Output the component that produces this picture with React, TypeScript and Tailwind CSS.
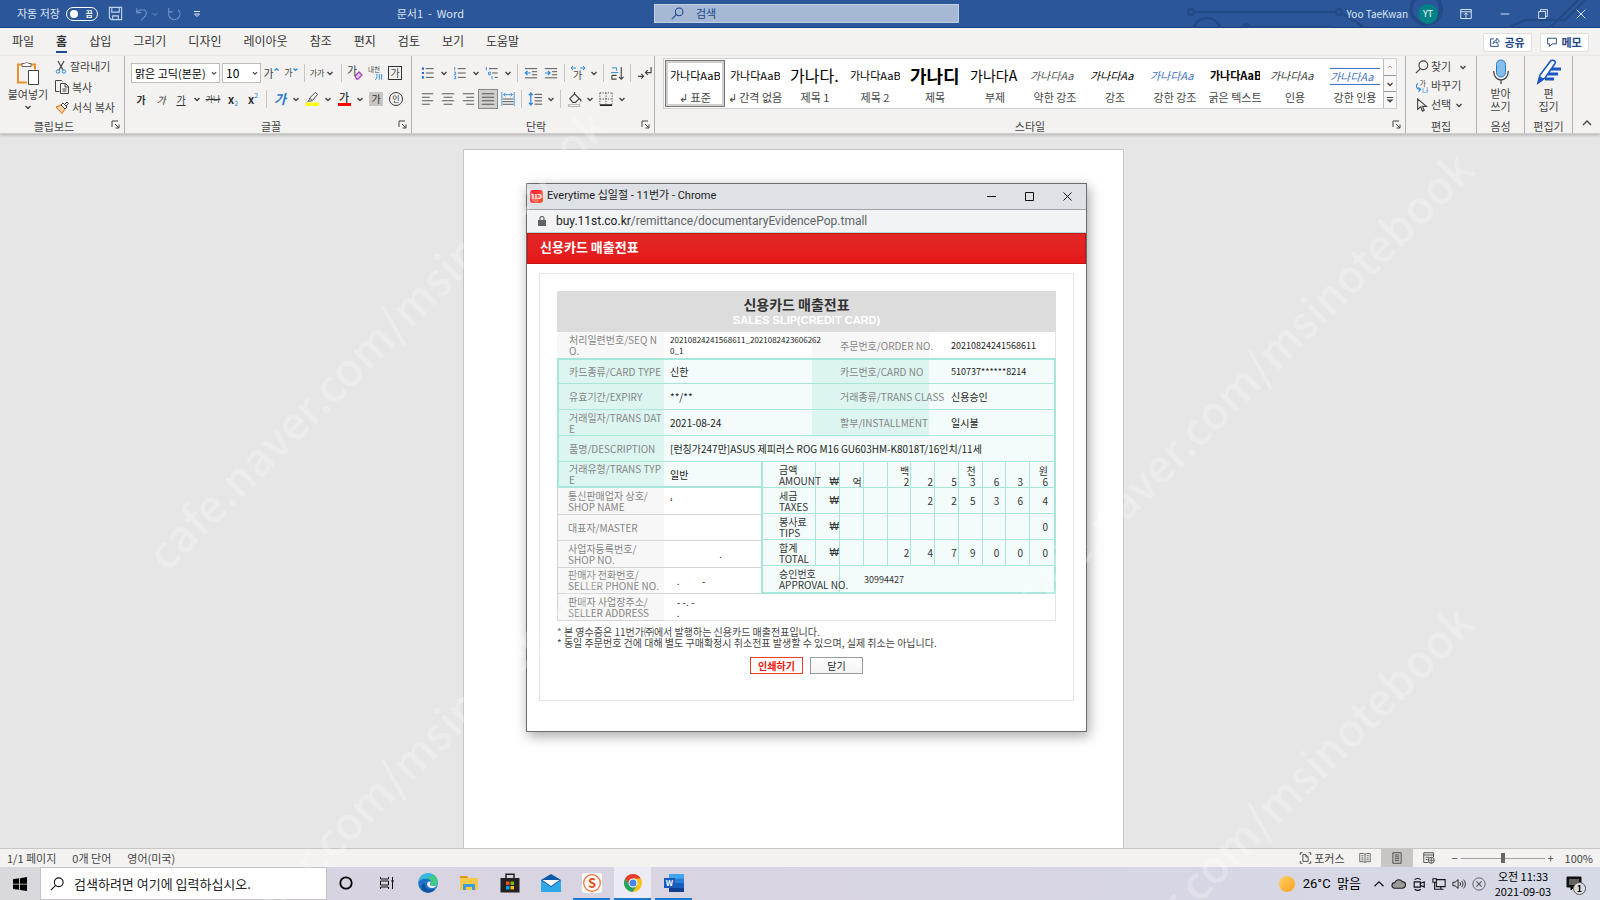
import React from 'react';

interface ChildrenProps {
  children?: React.ReactNode;
  className?: string;
}

const Svg: React.FC<ChildrenProps & { box?: string }> = ({ children, className = 'w-4 h-4', box = '0 0 16 16' }) => (
  <svg viewBox={box} className={`shrink-0 ${className}`} fill="none" stroke="#444" aria-hidden="true">
    {children}
  </svg>
);

const Chevron: React.FC<{ className?: string }> = ({ className = 'w-3 h-3' }) => (
  <Svg className={className} box="0 0 12 12">
    <path d="M3.5 5l2.5 2.5L8.5 5" strokeWidth="1.4" />
  </Svg>
);

const Tool: React.FC<ChildrenProps & { label: string }> = ({ children, className = 'w-5', label }) => (
  <button aria-label={label} className={`h-5 shrink-0 flex items-center justify-center whitespace-nowrap ${className}`}>
    {children}
  </button>
);

const Divider = () => <span className="w-px h-[18px] mx-[3px] shrink-0 bg-[#c8c6c4]" />;

const Launcher = () => (
  <button aria-label="옵션" className="absolute right-1 bottom-1">
    <Svg className="w-[9px] h-[9px]" box="0 0 9 9">
      <path d="M1 7V1h6M4 4l4 4M8 4.5V8H4.5" />
    </Svg>
  </button>
);

const Group: React.FC<ChildrenProps & { label: string; launcher?: boolean }> = ({ children, className = '', label, launcher }) => (
  <section className={`relative flex flex-col border-r border-[#b3b0ad] h-[77px] ${className}`}>
    <div className="flex-1 pt-px">{children}</div>
    <h2 className="text-[11px] leading-[14px] h-[14px] text-center text-[#444] font-normal">{label}</h2>
    {launcher && <Launcher />}
  </section>
);

const Lines: React.FC<{ rows: number[][] }> = ({ rows }) => (
  <>
    {rows.map(([x1, x2, y]) => (
      <path key={y} d={`M${x1} ${y}H${x2}`} />
    ))}
  </>
);

const tabs = ['파일', '홈', '삽입', '그리기', '디자인', '레이아웃', '참조', '편지', '검토', '보기', '도움말'];

const styles = [
  { name: '↲ 표준', sample: '가나다AaB', look: 'text-[11px] text-black' },
  { name: '↲ 간격 없음', sample: '가나다AaB', look: 'text-[11px] text-black' },
  { name: '제목 1', sample: '가나다.', look: 'text-[16px] text-black' },
  { name: '제목 2', sample: '가나다AaB', look: 'text-[11px] text-black' },
  { name: '제목', sample: '가나디', look: 'text-[18px] font-bold text-black' },
  { name: '부제', sample: '가나다A', look: 'text-[14px] text-black' },
  { name: '약한 강조', sample: '가나다Aa', look: 'text-[11px] italic text-[#555]' },
  { name: '강조', sample: '가나다Aa', look: 'text-[11px] italic text-black' },
  { name: '강한 강조', sample: '가나다Aa', look: 'text-[11px] italic text-[#4472c4]' },
  { name: '굵은 텍스트', sample: '가나다AaB', look: 'text-[11px] font-bold text-black' },
  { name: '인용', sample: '가나다Aa', look: 'text-[11px] italic text-[#404040]' },
  { name: '강한 인용', sample: '가나다Aa', look: 'text-[11px] italic text-[#4472c4] border-y border-[#4472c4]' },
];

const TitleBar = () => (
  <header className="relative h-7 shrink-0 flex items-center bg-[#2b579a] border-b border-[#123f80] text-[#dbe5f3] text-[11px]">
    <svg className="absolute right-0 top-0 h-7 w-[420px]" viewBox="0 0 420 28" fill="none" stroke="#224a86" strokeWidth="2.5" aria-hidden="true">
      <circle cx="11" cy="12" r="3" />
      <path d="M14 12h142M163 14l22 14M65 27h85M330 27l15-7h40l20-20M370 28l28-28" />
      <circle cx="159" cy="12" r="3" />
      <circle cx="66" cy="27" r="3" />
      <circle cx="27" cy="32" r="14" />
      <circle cx="246" cy="9" r="15" strokeWidth="4" />
    </svg>
    <div className="relative flex-1 flex items-center pl-[17px] gap-1.5">
      <span>자동 저장</span>
      <button role="switch" aria-checked="false" className="w-8 h-[14px] rounded-full border border-white flex items-center justify-between pl-[3px] pr-1 text-[8px] font-bold text-white">
        <span className="w-2 h-2 rounded-full bg-white" />끔
      </button>
      <button aria-label="저장" className="ml-1">
        <Svg className="w-[15px] h-[15px]">
          <path d="M1.500 1.500h13v13h-11l-2-2zM4 1.500v5h8v-5M5 14.500v-4h6v4" stroke="#c3d3ea" strokeWidth="1.200" />
        </Svg>
      </button>
      <button aria-label="실행 취소" className="ml-1.5 flex items-center">
        <Svg className="w-[14px] h-[16px]">
          <path d="M2 1.500v5h5M2 6.500C5 2 13 2 13 7c0 3-3 5-6 8" stroke="#6d90c6" strokeWidth="1.300" />
        </Svg>
        <Svg className="w-3 h-3" box="0 0 12 12"><path d="M3.500 5L6 7.500 8.500 5" stroke="#6d90c6" /></Svg>
      </button>
      <button aria-label="다시 실행">
        <Svg className="w-[14px] h-[14px]">
          <path d="M2 1v4.500h4.500M12.500 3a6.500 6.500 0 1 1-10 2" stroke="#6d90c6" strokeWidth="1.300" />
        </Svg>
      </button>
      <button aria-label="빠른 실행" className="ml-1">
        <Svg className="w-3 h-3" box="0 0 12 12"><path d="M3 3.500h6M3.500 6L6 8.500 8.500 6z" stroke="#dbe5f3" /></Svg>
      </button>
      <h1 className="ml-auto mr-[190px]">문서1&nbsp; -&nbsp; Word</h1>
    </div>
    <label className="relative w-[305px] h-[19px] flex items-center gap-3 pl-4 bg-[#a5b9d5] border border-[#c3d0e3]">
      <Svg className="w-[13px] h-[13px]"><circle cx="10" cy="6" r="4.700" stroke="#1f4788" strokeWidth="1.300" /><path d="M6.500 9.500L1 15" stroke="#1f4788" strokeWidth="1.300" /></Svg>
      <input aria-label="검색" placeholder="검색" className="flex-1 min-w-0 bg-transparent placeholder:text-[#1f4788]" />
    </label>
    <div className="relative flex-1 flex items-center justify-end pl-1">
      <span className="text-[10px]">Yoo TaeKwan</span>
      <span className="w-5 h-5 ml-2.5 mr-5 rounded-full bg-[#038387] text-white text-[9px] flex items-center justify-center">YT</span>
      <button aria-label="리본" className="w-[38px]"><Svg className="w-3 h-3 ml-[2px]"><path d="M1 2h14v12H1zM1 5h14M8 13V7M5.500 9L8 6.500 10.500 9" stroke="#dbe5f3" strokeWidth="1.300" /></Svg></button>
      <button aria-label="최소화" className="w-[38px]"><Svg className="w-2.5 h-2.5 ml-[4px]"><path d="M1 8h14" stroke="#dbe5f3" strokeWidth="1.500" /></Svg></button>
      <button aria-label="복원" className="w-[38px]"><Svg className="w-2.5 h-2.5 ml-[4px]"><path d="M1 4h11v11H1zM4 4V1h11v11h-3" stroke="#dbe5f3" strokeWidth="1.500" /></Svg></button>
      <button aria-label="닫기" className="w-7"><Svg className="w-2.5 h-2.5 ml-[4px]"><path d="M1 1l14 14M15 1L1 15" stroke="#dbe5f3" strokeWidth="1.500" /></Svg></button>
    </div>
  </header>
);

const TabRow = () => (
  <nav className="h-7 shrink-0 flex items-center bg-[#f3f2f1] pl-3 pr-[11px] text-[12px] text-[#333]">
    <div className="flex gap-[22px] flex-1">
      {tabs.map((tab) => (
        <button key={tab} className={tab === '홈' ? 'leading-5 border-b-2 border-[#1a4a94] font-bold' : 'leading-5 border-b-2 border-transparent'}>
          {tab}
        </button>
      ))}
    </div>
    <div className="flex gap-2 text-[11px] font-bold text-[#1f4788]">
      <button className="h-[19px] w-[49px] flex items-center justify-center gap-1 bg-white border border-[#e1dfdd] rounded-[2px]">
        <Svg className="w-2.5 h-2.5"><path d="M6 3H1v12h12v-4M5 11c0-4 3-6 6-6V2l4 4.500-4 4V8c-3 0-5 1-6 3z" stroke="#1f4788" strokeWidth="1.500" /></Svg>
        공유
      </button>
      <button className="h-[19px] w-[49px] flex items-center justify-center gap-1 bg-white border border-[#e1dfdd] rounded-[2px]">
        <Svg className="w-2.5 h-2.5"><path d="M1 2h14v9H8l-4 4v-4H1z" stroke="#1f4788" strokeWidth="1.500" /></Svg>
        메모
      </button>
    </div>
  </nav>
);

const Clipboard = () => (
  <Group label="클립보드" launcher className="w-[125px] shrink-0 pr-4">
    <div className="flex -mr-4">
      <button className="w-[54px] ml-px flex flex-col items-center text-[11px] leading-[14px]">
        <Svg className="w-6 h-[27px] mt-[3px]" box="0 0 24 27">
          <path d="M6 4.500H2v18h9M15 4.500h4v5" stroke="#e8912d" strokeWidth="2" />
          <path d="M6 3.500h2.500a2.500 2.500 0 0 1 4 0H15v3H6z" fill="#fff" stroke="#666" />
          <path d="M12.500 10.500h10v14h-10z" fill="#fff" stroke="#444" />
        </Svg>
        붙여넣기
        <Chevron />
      </button>
      <div className="flex flex-col text-[11px] leading-[19px] h-[60px] justify-between">
        <button className="flex items-center gap-[3px]">
          <Svg className="w-3 h-[14px]" box="0 0 12 14"><path d="M3 1l5 9M9 1L4 10" strokeWidth="1.200" /><circle cx="3" cy="11.500" r="1.700" stroke="#2b88d8" /><circle cx="9" cy="11.500" r="1.700" stroke="#2b88d8" /></Svg>
          잘라내기
        </button>
        <button className="flex items-center gap-[3px]">
          <Svg className="w-[14px] h-[14px]" box="0 0 14 14"><path d="M4.500 11.500h-4V.5h6l1 1M5.500 3.500h5l3 3v7h-8zM10 3.500v3.500h3.500M7.500 9h4M7.500 11h4" /></Svg>
          복사
        </button>
        <button className="flex items-center gap-[3px]">
          <Svg className="w-[14px] h-[13px]" box="0 0 14 13"><path d="M1 6l5-2 4 4-3 4.500L1 6z" fill="#fbd2a0" stroke="#e36c0a" /><path d="M6 4l2-2 4 4-2 2zM9.500 3.500L12 1l1.500 1.500L11 5" fill="#fff" /></Svg>
          서식 복사
        </button>
      </div>
    </div>
  </Group>
);

const FontGroup = () => (
  <Group label="글꼴" launcher className="w-[287px] shrink-0 pl-[6px]">
    <div className="flex items-center h-8 text-[11px]">
      <div className="relative w-[89px] mr-0.5">
        <select aria-label="글꼴" className="appearance-none w-full h-5 pl-[3px] bg-white border border-[#bebbb8] text-[11px] text-black">
          <option>맑은 고딕(본문)</option>
        </select>
        <span className="absolute right-px top-1 pointer-events-none"><Chevron className="w-[10px] h-3" /></span>
      </div>
      <div className="relative w-[39px]">
        <select aria-label="글꼴 크기" className="appearance-none w-full h-5 pl-[3px] bg-white border border-[#bebbb8] text-[12px] text-black">
          <option>10</option>
        </select>
        <span className="absolute right-px top-1 pointer-events-none"><Chevron className="w-[10px] h-3" /></span>
      </div>
      <Tool label="글꼴 크게"><span className="text-[11px]">가</span><Svg className="w-[5px] h-3" box="0 0 5 12"><path d="M.5 3.500l2-2 2 2" stroke="#2b88d8" strokeWidth="1.200" /></Svg></Tool>
      <Tool label="글꼴 작게"><span className="text-[9px]">가</span><Svg className="w-[5px] h-3" box="0 0 5 12"><path d="M.5 1.500l2 2 2-2" stroke="#2b88d8" strokeWidth="1.200" /></Svg></Tool>
      <Divider />
      <Tool label="대/소문자" className="w-[30px] text-[8px]">가가<Chevron /></Tool>
      <Divider />
      <Tool label="서식 지우기"><Svg className="w-4 h-4"><path d="M8 11l4-4 3 3-4 4H9.500z" fill="#e7c9ee" stroke="#a346b8" strokeWidth="1.300" /><text x="0" y="10" fontSize="11" fill="#444" stroke="none">가</text></Svg></Tool>
      <Tool label="윗주 달기"><Svg className="w-[15px] h-4"><path d="M9.500 9v3c0 2-1 3-2 3M12 9v6M14.500 9v6" stroke="#2b88d8" /><text x="0" y="7" fontSize="7" fill="#444" stroke="none">내천</text></Svg></Tool>
      <Tool label="문자 테두리"><span className="w-[14px] h-[14px] border border-[#333] text-[10px] leading-[12px]">가</span></Tool>
    </div>
    <div className="flex items-center h-5 text-[10px] text-[#333]">
      <Tool label="굵게"><b>가</b></Tool>
      <Tool label="기울임꼴"><i>가</i></Tool>
      <Tool label="밑줄"><u>가</u></Tool>
      <Chevron />
      <Tool label="취소선"><s className="text-[8px]">가나</s></Tool>
      <Tool label="아래 첨자"><b className="text-[11px]">x</b><span className="text-[7px] mt-2 text-[#2b88d8]">2</span></Tool>
      <Tool label="위 첨자"><b className="text-[11px]">x</b><span className="text-[7px] mb-2 text-[#2b88d8]">2</span></Tool>
      <Divider />
      <Tool label="텍스트 효과"><b className="text-[13px] text-[#2b78c8] italic">가</b></Tool>
      <Chevron />
      <Tool label="강조 색"><Svg className="w-[15px] h-4"><path d="M4 10l1-3 6-6 2.500 2-5.500 6.500-3 1zM5 7l2.500 2.500M4 10l-1.500 1" /><path d="M1 13.500h14" stroke="#ff0" strokeWidth="3.500" /></Svg></Tool>
      <Chevron />
      <Tool label="글꼴 색"><span className="text-[11px] leading-[11px] h-[14px] w-[13px] border-b-[3px] border-[#f00] font-medium">가</span></Tool>
      <Chevron />
      <Tool label="문자 음영"><span className="w-[14px] h-[14px] bg-[#c8c6c4] leading-[13px]">가</span></Tool>
      <Tool label="원 문자"><span className="w-[14px] h-[14px] border border-[#333] rounded-full text-[8px] leading-[12px]">인</span></Tool>
    </div>
  </Group>
);

const Paragraph = () => (
  <Group label="단락" launcher className="w-[243px] shrink-0 pl-[6px]">
    <div className="flex items-center h-8">
      <Tool label="글머리 기호"><Svg className="w-[14px] h-[14px]"><path d="M5.500 3h9M5.500 8h9M5.500 13h9" /><path d="M1 3h2.500M1 8h2.500M1 13h2.500" stroke="#1a6fc4" strokeWidth="2.500" /></Svg></Tool>
      <Chevron />
      <Tool label="번호 매기기"><Svg className="w-[14px] h-[14px]"><path d="M5.500 3h9M5.500 8h9M5.500 13h9" /><path d="M2 1v4M1 7h2v2.500H1M1 11.500h2v3H1" stroke="#2b88d8" /></Svg></Tool>
      <Chevron />
      <Tool label="다단계 목록"><Svg className="w-[14px] h-[14px]"><path d="M4.500 3h10M8 8h6.500M11 13h3.500" /><path d="M1.500 1v4M4 7h2v3H4zM8 11.500v4" stroke="#2b88d8" /></Svg></Tool>
      <Chevron />
      <Divider />
      <Tool label="내어쓰기"><Svg className="w-[14px] h-4"><path d="M1 3h14M9 6.500h6M9 10h6M1 13.500h14" /><path d="M7.500 8h-6M4 5.500L1.500 8 4 10.500" stroke="#2b88d8" strokeWidth="1.400" /></Svg></Tool>
      <Tool label="들여쓰기"><Svg className="w-[14px] h-4"><path d="M1 3h14M9 6.500h6M9 10h6M1 13.500h14" /><path d="M1 8h6M4.500 5.500L7 8l-2.500 2.500" stroke="#2b88d8" strokeWidth="1.400" /></Svg></Tool>
      <Divider />
      <Tool label="한글 레이아웃"><Svg><path d="M6 3H1M3 1L1 3l2 2M10 3h5M13 1l2 2-2 2" stroke="#2b88d8" /><text x="3" y="14" fontSize="10" fill="#444" stroke="none">가</text></Svg></Tool>
      <Chevron />
      <Divider />
      <Tool label="정렬"><Svg className="w-[15px] h-[15px]"><path d="M2 2h5v3M1 7h8" stroke="#2b88d8" /><path d="M2 10h5M2 10v4h5M12 1v13M9.500 11.500L12 14l2.500-2.500" strokeWidth="1.200" /></Svg></Tool>
      <Divider />
      <Tool label="편집 기호"><Svg className="w-[15px] h-[15px]"><path d="M1 11h6M4.500 8.500L7 11l-2.500 2.500M15 1v6H9M11.500 4.500L9 7l2.500 2.500" strokeWidth="1.200" /></Svg></Tool>
    </div>
    <div className="flex items-center h-5">
      <Tool label="왼쪽 맞춤"><Svg className="w-[14px] h-[14px]"><Lines rows={[[1, 14, 2], [1, 10, 6], [1, 14, 10], [1, 10, 14]]} /></Svg></Tool>
      <Tool label="가운데 맞춤"><Svg className="w-[14px] h-[14px]"><Lines rows={[[1, 15, 2], [3, 13, 6], [1, 15, 10], [3, 13, 14]]} /></Svg></Tool>
      <Tool label="오른쪽 맞춤"><Svg className="w-[14px] h-[14px]"><Lines rows={[[2, 15, 2], [6, 15, 6], [2, 15, 10], [6, 15, 14]]} /></Svg></Tool>
      <Tool label="양쪽 맞춤" className="w-5 bg-[#d2d0ce] border border-[#888]"><Svg className="w-[14px] h-[14px]"><Lines rows={[[1, 15, 2], [1, 15, 6], [1, 15, 10], [1, 15, 14]]} /></Svg></Tool>
      <Tool label="균등 분할"><Svg className="w-[14px] h-[14px]"><Lines rows={[[2, 14, 8], [2, 14, 11], [2, 14, 14]]} /><path d="M1 0v16M15 0v16M3 3h10M5 1L3 3l2 2M11 1l2 2-2 2" stroke="#2b88d8" /></Svg></Tool>
      <Divider />
      <Tool label="줄 간격"><Svg className="w-[15px] h-4"><path d="M7 3h8M7 6.500h8M7 10h8M7 13.500h8" /><path d="M3 2v12M1 4l2-2.500L5 4M1 12l2 2.500L5 12" stroke="#2b88d8" strokeWidth="1.300" /></Svg></Tool>
      <Chevron />
      <Divider />
      <Tool label="음영"><Svg className="w-[15px] h-[15px]"><path d="M3 7l5-5 5 5-4 4H6zM8 2V0M13 7c2 1 2 2 1.500 3" strokeWidth="1.300" /><path d="M1.500 13.500h12v2h-12z" stroke="#aaa" fill="#fff" /></Svg></Tool>
      <Chevron />
      <Tool label="테두리"><Svg className="w-[14px] h-[14px]"><path d="M1 1h14M1 8h14M1 1v13M8 1v13M15 1v13" strokeDasharray="1.500 1.500" /><path d="M1 15h14" strokeWidth="2" stroke="#222" /></Svg></Tool>
      <Chevron />
    </div>
  </Group>
);

const StylesGroup = () => (
  <Group label="스타일" launcher className="flex-1 min-w-0 pl-2 pr-2">
    <div className="mt-px h-[51px] flex bg-white border border-[#d2d0ce]">
      <div className="flex-1 min-w-0 flex overflow-hidden p-px">
        {styles.map((style, index) => (
          <button
            key={style.name}
            className={`w-[60px] h-[47px] shrink-0 flex flex-col items-center text-[11px] leading-4 text-[#444] whitespace-nowrap ${index === 0 ? 'border border-[#777] ring-2 ring-inset ring-[#d2d0ce]' : 'border border-transparent'}`}
          >
            <span className={`w-[50px] mt-[7px] mb-1 h-[17px] leading-[15px] overflow-hidden text-left ${style.look}`}>{style.sample}</span>
            <span>{style.name}</span>
          </button>
        ))}
      </div>
      <div className="w-[13px] flex flex-col border-l border-[#bebbb8] bg-[#f8f8f8]">
        <button aria-label="위로" className="flex-1 flex items-center justify-center"><Svg className="w-3 h-3" box="0 0 12 12"><path d="M4 7l2-2 2 2" stroke="#aaa" /></Svg></button>
        <button aria-label="아래로" className="flex-1 flex items-center justify-center border-y border-[#999]"><Chevron /></button>
        <button aria-label="자세히" className="flex-1 flex items-center justify-center"><Svg className="w-3 h-3" box="0 0 12 12"><path d="M3 3.500h6M4 6h4L6 8z" strokeWidth="1.200" /></Svg></button>
      </div>
    </div>
  </Group>
);

const Ribbon = () => (
  <div className="relative z-10 h-[78px] shrink-0 flex bg-[#f3f2f1] text-[#444] border-b border-[#d2d0ce] shadow-[0_1px_3px_rgba(0,0,0,0.25)]">
    <Clipboard />
    <FontGroup />
    <Paragraph />
    <StylesGroup />
    <Group label="편집" className="w-[71px] shrink-0">
      <div className="flex flex-col pl-[9px] text-[11px] leading-[19px]">
        <button className="flex items-center gap-0.5"><Svg className="w-[14px] h-[14px]"><circle cx="9.500" cy="6" r="5" strokeWidth="1.300" /><path d="M6 10l-5 5" strokeWidth="1.300" /></Svg>찾기<Chevron className="w-3 h-3 ml-1" /></button>
        <button className="flex items-center gap-0.5"><Svg className="w-[14px] h-[14px]"><path d="M3 5c-3 3-1 7 3 7M4 9.500L6.500 12 4 14.500" stroke="#2b88d8" strokeWidth="1.300" /><text x="5" y="8" fontSize="8" fill="#444" stroke="none">가</text><text x="8" y="15.500" fontSize="8" fill="#2b88d8" stroke="none">나</text></Svg>바꾸기</button>
        <button className="flex items-center gap-0.5"><Svg className="w-[14px] h-[14px]"><path d="M3 1v12l3.500-3 2 5 2-1-2-4.500H13z" strokeWidth="1.300" /></Svg>선택<Chevron /></button>
      </div>
    </Group>
    <Group label="음성" className="w-12 shrink-0">
      <button className="w-full flex flex-col items-center text-[11px] leading-[13px]">
        <Svg className="w-4 h-[26px] mt-[2px] mb-[2px]" box="0 0 16 26"><rect x="3.500" y="1" width="9" height="17" rx="4.500" fill="#83beec" stroke="#2b78c8" /><path d="M.7 12c0 12 14.600 12 14.600 0M8 21v4" strokeWidth="1.300" /></Svg>
        받아<br />쓰기
      </button>
    </Group>
    <Group label="편집기" className="w-12 shrink-0">
      <button className="w-full flex flex-col items-center text-[11px] leading-[13px]">
        <Svg className="w-[26px] h-[26px] mt-[2px] mb-[2px]" box="0 0 26 26"><path d="M14 10h11M12 15h10M9 20h9" stroke="#1a56c4" strokeWidth="3" /><path d="M2 24l2-8L15 1.500c3-1 5 1 4 3L9 19z" fill="#fff" stroke="#1a56c4" strokeWidth="1.600" /><path d="M2 24l1.500-6L8 20z" fill="#1a56c4" stroke="#1a56c4" /></Svg>
        편<br />집기
      </button>
    </Group>
    <div className="w-[27px] shrink-0 flex items-end justify-center pb-1">
      <button aria-label="리본 축소"><Svg className="w-3 h-3" box="0 0 12 12"><path d="M2 8l4-4 4 4" strokeWidth="1.400" /></Svg></button>
    </div>
  </div>
);

const won = '₩';
const amounts = [
  { ko: '금액', en: 'AMOUNT', units: ['억', '', '백', '', '', '천', '', '', '원'], digits: ['', '', '2', '2', '5', '3', '6', '3', '6'] },
  { ko: '세금', en: 'TAXES', digits: ['', '', '', '2', '2', '5', '3', '6', '4'] },
  { ko: '봉사료', en: 'TIPS', digits: ['', '', '', '', '', '', '', '', '0'] },
  { ko: '합계', en: 'TOTAL', digits: ['', '', '2', '4', '7', '9', '0', '0', '0'] },
];

const Amounts = () => (
  <table className="w-full table-fixed border-separate border-spacing-0 text-[#333]">
    <colgroup>
      <col className="w-[53px]" />
      <col className="w-6" />
      {amounts[0].digits.map((_, i) => (
        <col key={i} />
      ))}
    </colgroup>
    <tbody>
      {amounts.map((row, r) => (
        <tr key={row.en} className="h-[26px]">
          <th scope="row" className="pl-4 text-left font-normal whitespace-nowrap border-b border-r border-[#a8e6da]">{row.ko}<br />{row.en}</th>
          <td className={`text-right font-['Liberation_Sans',sans-serif] border-b border-r border-[#a8e6da] ${r === 0 ? 'align-bottom' : ''}`}>{won}</td>
          {row.digits.map((digit, i) => (
            <td
              key={i}
              className={`text-right border-b border-[#a8e6da] ${i < 8 ? 'border-r' : ''} ${i < 5 ? 'pr-px' : 'pr-1.5'} ${r === 0 ? 'align-bottom' : ''}`}
            >
              {row.units && <span className="block min-h-[11px]">{row.units[i]}</span>}
              {digit}
            </td>
          ))}
        </tr>
      ))}
      <tr className="h-[26px]">
        <th scope="row" colSpan={2} className="pl-4 text-left font-normal whitespace-nowrap border-r border-[#a8e6da]">승인번호<br />APPROVAL NO.</th>
        <td colSpan={9} className="pl-6 text-[9px]">30994427</td>
      </tr>
    </tbody>
  </table>
);

const Label: React.FC<ChildrenProps> = ({ children, className = '' }) => (
  <th scope="row" className={`text-left font-normal whitespace-pre text-[#858585] ${className}`}>{children}</th>
);

const mintLabel = 'bg-[#dcf5f0] border-b border-[#a8e6da]';
const mintCell = 'bg-[#f3fcfb] border-b border-[#a8e6da]';
const plainLabel = 'pl-2.5 bg-[#f7f7f7] border-b border-l border-[#d4d4d4]';

const mintRows = [
  { label: '카드종류/CARD TYPE', value: '신한', label2: '카드번호/CARD NO', value2: '510737******8214' },
  { label: '유효기간/EXPIRY', value: '**/**', label2: '거래종류/TRANS CLASS', value2: '신용승인' },
  { label: '거래일자/TRANS DAT\nE', value: '2021-08-24', label2: '할부/INSTALLMENT', value2: '일시불' },
];

const shopRows = [
  { label: '통신판매업자 상호/\nSHOP NAME', value: '‘' },
  { label: '대표자/MASTER', value: '' },
  { label: '사업자등록번호/\nSHOP NO.', value: '                      .' },
  { label: '판매자 전화번호/\nSELLER PHONE NO.', value: '   .          -' },
];

const Receipt = () => (
  <table className="w-full table-fixed border-separate border-spacing-0 text-[10px] leading-[11px] text-[#222]">
    <colgroup>
      <col className="w-[107px]" />
      <col className="w-[97px]" />
      <col className="w-[51px]" />
      <col className="w-[117px]" />
      <col />
    </colgroup>
    <thead>
      <tr className="h-[41px]">
        <th colSpan={5} className="bg-[#dcdcdc]">
          <div className="pr-5 text-[14px] leading-4 text-[#333]">신용카드 매출전표</div>
          <div className="font-['Liberation_Sans',sans-serif] text-[11px] leading-4 text-white">SALES SLIP(CREDIT CARD)</div>
        </th>
      </tr>
    </thead>
    <tbody>
      <tr className="h-[26px]">
        <Label className="pl-3 bg-[#f7f7f7]">{'처리일련번호/SEQ N\nO.'}</Label>
        <td colSpan={2} className="pl-1.5 text-[8px] whitespace-pre">{'20210824241568611_2021082423606262\n0_1'}</td>
        <Label className="bg-[#f7f7f7] pl-7">주문번호/ORDER NO.</Label>
        <td className="pl-5.5 text-[9px] border-r border-[#e4e4e4]">20210824241568611</td>
      </tr>
      {mintRows.map((row, index) => (
        <tr key={row.label} className="h-[26px]">
          <Label className={`${mintLabel} pl-2.5 border-l-2 ${index === 0 ? 'border-t-2' : ''}`}>{row.label}</Label>
          <td colSpan={2} className={`${mintCell} pl-1.5 ${index === 0 ? 'border-t-2' : ''}`}>{row.value}</td>
          <Label className={`${mintLabel} pl-7 ${index === 0 ? 'border-t-2' : ''}`}>{row.label2}</Label>
          <td className={`${mintCell} pl-5.5 border-r-2 ${index === 0 ? 'border-t-2 text-[9px]' : ''}`}>{row.value2}</td>
        </tr>
      ))}
      <tr className="h-[26px]">
        <Label className={`${mintLabel} pl-2.5 border-l-2`}>품명/DESCRIPTION</Label>
        <td colSpan={4} className={`${mintCell} pl-1.5 border-r-2`}>[런칭가247만]ASUS 제피러스 ROG M16 GU603HM-K8018T/16인치/11세</td>
      </tr>
      <tr className="h-[26px]">
        <Label className={`${mintLabel} pl-2.5 border-l-2 border-b-2`}>{'거래유형/TRANS TYP\nE'}</Label>
        <td className={`${mintCell} pl-1.5 border-b-2`}>일반</td>
        <td rowSpan={5} colSpan={3} className="p-0 align-top bg-[#f3fcfb] border-l-2 border-r-2 border-b-2 border-[#a8e6da]">
          <Amounts />
        </td>
      </tr>
      {shopRows.map((row) => (
        <tr key={row.label} className="h-[26px]">
          <Label className={plainLabel}>{row.label}</Label>
          <td className="pl-1.5 whitespace-pre border-b border-[#d4d4d4]">{row.value}</td>
        </tr>
      ))}
      <tr className="h-[27px]">
        <Label className={plainLabel}>{'판매자 사업장주소/\nSELLER ADDRESS'}</Label>
        <td colSpan={4} className="pl-1.5 whitespace-pre border-b border-r border-[#e4e4e4]">{'   - -. -\n   .'}</td>
      </tr>
    </tbody>
  </table>
);

const ChromeWindow = () => (
  <section className="absolute left-[526px] top-[49px] w-[561px] border border-[#6b6b6b] bg-white shadow-[2px_4px_12px_rgba(0,0,0,0.35)]">
    <div className="h-[26px] flex items-center bg-[#dee1e6] border-b border-[#a0a3a8] pl-[3px] font-[Roboto,'Noto_Sans_CJK_KR',sans-serif] text-[11px] text-[#222]">
      <span className="w-[13px] h-[13px] mr-1 rounded-[3px] bg-gradient-to-br from-[#ff0038] to-[#ff5a2e] flex items-center justify-center">
        <Svg className="w-[11px] h-[7px]" box="0 0 11 7"><path d="M.5 1.500h1.500V6M4 1.500h1V6M6.500 1.500H8a2 2 0 0 1 0 4H6.500" stroke="#fff" strokeWidth="1.200" /></Svg>
      </span>
      <span className="flex-1">Everytime 십일절 - 11번가 - Chrome</span>
      <button aria-label="최소화" className="w-[38px]"><Svg className="w-[9px] h-[9px] mx-auto" box="0 0 9 9"><path d="M0 4.500h9" stroke="#111" /></Svg></button>
      <button aria-label="최대화" className="w-[38px]"><Svg className="w-[9px] h-[9px] mx-auto" box="0 0 9 9"><path d="M.5.5h8v8h-8z" stroke="#111" /></Svg></button>
      <button aria-label="닫기" className="w-[38px]"><Svg className="w-[9px] h-[9px] mx-auto" box="0 0 9 9"><path d="M.5.5l8 8M8.500.5l-8 8" stroke="#111" /></Svg></button>
    </div>
    <div className="h-[23px] flex items-center gap-2.5 bg-[#f1f3f4] border-b border-[#b5dcd8] pl-[11px] font-[Roboto,sans-serif] text-[12px] text-[#5f6368]">
      <Svg className="w-2 h-[10px]" box="0 0 8 10"><path d="M0 4h8v6H0z" fill="#5f6368" stroke="none" /><path d="M2 4V2.500a2 2 0 0 1 4 0V4" stroke="#5f6368" strokeWidth="1.200" /></Svg>
      <span><span className="text-[#202124]">buy.11st.co.kr</span>/remittance/documentaryEvidencePop.tmall</span>
    </div>
    <h2 className="h-[31px] pl-3 leading-[26px] bg-gradient-to-b from-[#e22828] to-[#e61717] border border-[#c41414] text-[13px] font-bold text-white">신용카드 매출전표</h2>
    <div className="mx-3 mt-[9px] mb-[30px] px-[17px] pt-[17px] pb-[26px] border border-[#e4e4e4]">
      <Receipt />
      <p className="mt-[5px] text-[10px] leading-[11px] text-[#444]">
        * 본 영수증은 11번가㈜에서 발행하는 신용카드 매출전표입니다.<br />
        * 동일 주문번호 건에 대해 별도 구매확정시 취소전표 발생할 수 있으며, 실제 취소는 아닙니다.
      </p>
      <div className="mt-[9px] flex justify-center gap-[7px] text-[10px]">
        <button className="w-[53px] h-[17px] leading-[14px] border border-[#f03c1e] text-[#e8140a] font-bold">인쇄하기</button>
        <button className="w-[53px] h-[17px] leading-[14px] border border-[#999] bg-gradient-to-b from-white to-[#f3f3f3] text-[#222]">닫기</button>
      </div>
    </div>
  </section>
);

const StatusBar = () => (
  <footer className="relative h-[19px] shrink-0 flex items-center bg-[#f3f2f1] border-t border-[#c8c6c4] pl-[7px] pr-[7px] text-[11px] text-[#444]">
    <span>1/1 페이지</span>
    <span className="ml-4">0개 단어</span>
    <span className="ml-4">영어(미국)</span>
    <button className="ml-auto mr-1 flex items-center gap-0.5"><Svg className="w-[13px] h-3"><path d="M1 4V1h3M12 1h3v3M1 12v3h3M12 15h3v-3M4.500 3.500h4l3 3v6h-7zM8.500 3.500v3h3" strokeWidth="1.200" /></Svg>포커스</button>
    <button aria-label="읽기 모드" className="w-8 flex justify-center"><Svg className="w-3 h-3"><path d="M8 3v11M1 2h5l2 1 2-1h5v11h-5l-2 1-2-1H1zM3 5h3M3 8h3M3 10.500h3M10 5h3M10 8h3M10 10.500h3" /></Svg></button>
    <button aria-label="인쇄 모양" className="w-8 h-full flex items-center justify-center bg-[#c8c6c4]"><Svg className="w-3 h-3"><path d="M2.500 1h11v14h-11zM5 4h6M5 6.500h6M5 9h6M5 11.500h6" strokeWidth="1.200" /></Svg></button>
    <button aria-label="웹 모양" className="w-8 mr-1 flex justify-center"><Svg className="w-3 h-3"><path d="M7 14H1V1h13v6M1 4h13M3.500 7H8M3.500 10H6" strokeWidth="1.200" /><circle cx="11" cy="11" r="4" strokeWidth="1.200" /><path d="M7 11h8M11 7v8" /></Svg></button>
    <button aria-label="축소" className="w-3">−</button>
    <input
      type="range"
      aria-label="확대/축소"
      defaultValue={50}
      className="w-[84px] h-4 appearance-none bg-transparent [&::-webkit-slider-runnable-track]:h-px [&::-webkit-slider-runnable-track]:bg-[#a19f9d] [&::-webkit-slider-thumb]:appearance-none [&::-webkit-slider-thumb]:w-1 [&::-webkit-slider-thumb]:h-[10px] [&::-webkit-slider-thumb]:-mt-[5px] [&::-webkit-slider-thumb]:bg-[#666]"
    />
    <button aria-label="확대" className="w-3">+</button>
    <span className="ml-2">100%</span>
  </footer>
);

const TaskIcon: React.FC<ChildrenProps & { label: string }> = ({ children, className = 'border-transparent', label }) => (
  <button aria-label={label} className={`h-full flex items-center justify-center w-[37px] mr-1 border-b-2 ${className}`}>
    <Svg className="w-5 h-5" box="0 0 20 20">{children}</Svg>
  </button>
);

const Taskbar = () => (
  <footer className="relative h-[33px] shrink-0 flex items-center bg-gradient-to-r from-[#d9d3e0] via-[#d8d4e2] to-[#d6d9e6] text-black">
    <button aria-label="시작" className="w-[40px] h-full flex items-center justify-center bg-[#d9d8dc]">
      <Svg className="w-[14px] h-[14px]"><path d="M0 2.500L7 1.500V7.600H0zM8 1.300L16 0v7.600H8zM0 8.500h7v6.100l-7-1zM8 8.500h8V16l-8-1.200z" fill="#000" stroke="none" /></Svg>
    </button>
    <label className="w-[287px] h-full flex items-center gap-[10px] pl-[9px] bg-white border border-[#c4c2c8]">
      <Svg className="w-[14px] h-[14px]"><circle cx="10" cy="6" r="5" stroke="#111" strokeWidth="1.300" /><path d="M6.500 9.500L1 15" stroke="#111" strokeWidth="1.300" /></Svg>
      <input aria-label="작업 표시줄 검색" placeholder="검색하려면 여기에 입력하십시오." className="flex-1 min-w-0 text-[13px] bg-transparent placeholder:text-[#222]" />
    </label>
    <TaskIcon label="Cortana"><circle cx="10" cy="10" r="5.700" stroke="#000" strokeWidth="1.800" /></TaskIcon>
    <TaskIcon label="작업 보기"><path d="M3.500 4v2h8V4M3.500 16v-2h8v2M3.500 8h8v4h-8zM15.500 4v12" stroke="#111" /><path d="M14.500 7h2v2h-2z" fill="#111" stroke="none" /></TaskIcon>
    <TaskIcon label="Edge">
      <circle cx="10" cy="10" r="9.800" fill="#1b74c9" stroke="none" />
      <path d="M.5 9C1.500 3 6 .2 10 .2c6 0 9.800 4 9.800 8 0 3-2 4.800-4.500 4.800-2 0-3-.8-3-1.500s.8-1 .8-2.500c0-2-2-3.500-5-3.500C4.500 5.500 1.500 7 .5 9z" fill="#3fc98a" stroke="none" />
      <path d="M.5 9C1.500 3 6 .2 10 .2c3 0 5 1 6.500 2.300C13 2 9 5 7.500 5.500 4.500 5.500 1.500 7 .5 9z" fill="#35b8e8" stroke="none" />
      <path d="M7 10c-1 5 3 8.500 10 6-3 4-8 4.500-11 2.500C2.500 16 3 11 7 10z" fill="#11519e" stroke="none" />
      <path d="M9 11c0-2 2-3 3.800-2 0 1-.8 1.500-.8 2.500 0 .7 1 1.500 3 1.500 1.500 0 3 0 4-1.500-1 3-4 4-6 3.500C10.500 14.500 9 13 9 11z" fill="#e8eef5" stroke="none" />
    </TaskIcon>
    <TaskIcon label="파일 탐색기">
      <path d="M1 3h7l2 2h9v12H1z" fill="#f7c94b" stroke="none" />
      <path d="M1 3h7l1 2H1z" fill="#d9971e" stroke="none" />
      <path d="M4 17v-6h12v6h-3v-3H7v3z" fill="#3d9be0" stroke="none" />
    </TaskIcon>
    <TaskIcon label="Store">
      <path d="M6 5V1.200h8V5" stroke="#222" strokeWidth="1.500" />
      <path d="M.5 5h19v14.500H.5z" fill="#222" stroke="none" />
      <path d="M6 8.500h3.500V12H6z" fill="#f25022" stroke="none" />
      <path d="M10.500 8.500H14V12h-3.500z" fill="#7fba00" stroke="none" />
      <path d="M6 13h3.500v3.500H6z" fill="#00a4ef" stroke="none" />
      <path d="M10.500 13H14v3.500h-3.500z" fill="#ffb900" stroke="none" />
    </TaskIcon>
    <TaskIcon label="메일">
      <path d="M0 7l10-6 10 6v12H0z" fill="#0d5aa8" stroke="none" />
      <path d="M0 7l10 7 10-7v12H0z" fill="#2fa9e8" stroke="none" />
      <path d="M1.500 7h17L10 13z" fill="#fff" stroke="none" />
    </TaskIcon>
    <TaskIcon label="S" className="border-[#1478d4]">
      <rect width="20" height="20" rx="3" fill="#fff" stroke="none" />
      <circle cx="10" cy="10" r="8.300" stroke="#f26522" strokeWidth="1.200" />
      <text x="10" y="14.500" fontSize="13" fontWeight="700" textAnchor="middle" fill="#f04e12" stroke="none">S</text>
    </TaskIcon>
    <TaskIcon label="Chrome" className="border-[#1478d4] bg-[#ecebf3]">
      <circle cx="10" cy="10" r="9" fill="#fbc116" stroke="none" />
      <path d="M2.200 5.500A9 9 0 0 1 17.800 5.500H10L6 12z" fill="#e33b2e" stroke="none" />
      <path d="M2.200 5.500A9 9 0 0 0 9.500 19L14 12 6 12.300z" fill="#1fa463" stroke="none" />
      <circle cx="10" cy="10" r="4.500" fill="#fff" stroke="none" />
      <circle cx="10" cy="10" r="3.500" fill="#4285f4" stroke="none" />
    </TaskIcon>
    <TaskIcon label="Word" className="border-[#1478d4]">
      <path d="M5 1h15v18H5z" fill="#2b7cd3" stroke="none" />
      <path d="M5 1h15v4.500H5z" fill="#41a5ee" stroke="none" />
      <path d="M5 14.500h15V19H5z" fill="#103f91" stroke="none" />
      <path d="M5 10h15v4.500H5z" fill="#185abd" stroke="none" />
      <path d="M0 5h11v10H0z" fill="#185abd" stroke="none" />
      <text x="5.500" y="13" fontSize="8" fontWeight="700" textAnchor="middle" fill="#fff" stroke="none">W</text>
    </TaskIcon>
    <div className="ml-auto flex items-center text-[13px]">
      <span className="w-4 h-4 mr-2 rounded-full bg-gradient-to-br from-[#ffd45e] to-[#ff9d1e]" />
      <span className="font-[Roboto,'Noto_Sans_CJK_KR',sans-serif]">26°C&nbsp; 맑음</span>
      <div className="flex items-center gap-1.5 ml-3">
        <Svg className="w-3 h-3"><path d="M2 11l6-6 6 6" stroke="#111" strokeWidth="1.600" /></Svg>
        <Svg className="w-[15px] h-4"><path d="M4 12.500a3 3 0 0 1 0-6 4.500 4.500 0 0 1 8-1 3.500 3.500 0 0 1 0 7z" fill="#999" stroke="#222" strokeWidth="1.200" /></Svg>
        <Svg className="w-[14px] h-4"><path d="M2.500 5.500h7v6h-7zM9.500 7.500L14 5.500v6l-4.500-2M3 3c2-1.500 5-1.500 7 0M3 14c2 1.500 5 1.500 7 0" stroke="#111" strokeWidth="1.300" /></Svg>
        <Svg className="w-[14px] h-4"><path d="M5 3h10v8H5zM1 2h4v4H1zM3 6v8h10M10 11v3" stroke="#111" strokeWidth="1.200" /></Svg>
        <Svg className="w-[14px] h-4"><path d="M1 6h2.500L7 3v10l-3.500-3H1zM9 6c1 1 1 3 0 4M11 4.500c2 2 2 5 0 7M13 3c3 3 3 7 0 10" stroke="#111" /></Svg>
        <Svg className="w-[14px] h-4"><circle cx="8" cy="8" r="7" stroke="#555" /><path d="M5 5l6 6M11 5l-6 6" stroke="#555" strokeWidth="1.300" /></Svg>
      </div>
      <div className="w-[70px] ml-0.5 text-[11px] leading-[15px] text-center">오전 11:33<br />2021-09-03</div>
      <button aria-label="알림" className="relative w-[42px] pr-2.5 flex justify-center">
        <Svg className="w-4 h-4"><path d="M1 1h14v10H8l-3 3v-3H1z" fill="#111" stroke="#111" /><path d="M3 4h10M3 6h10M3 8h10" stroke="#ddd" strokeWidth=".8" /></Svg>
        <span className="absolute left-[15px] top-1.5 w-[13px] h-[13px] rounded-full bg-[#ddd] border border-[#555] text-[9px] leading-[11px] font-bold">1</span>
      </button>
    </div>
  </footer>
);

const Watermark = () => (
  <svg className="absolute inset-0 z-20 w-full h-full pointer-events-none" fill="#fff" fillOpacity="0.25" fontSize="45" fontWeight="500" aria-hidden="true">
    <text transform="translate(167 573) rotate(-45)">cafe.naver.com/msinotebook</text>
    <text transform="translate(167 1027) rotate(-45)">cafe.naver.com/msinotebook</text>
    <text transform="translate(1033 616) rotate(-45)">cafe.naver.com/msinotebook</text>
    <text transform="translate(1033 1070) rotate(-45)">cafe.naver.com/msinotebook</text>
  </svg>
);

export default function App() {
  return (
    <div className="relative h-screen flex flex-col overflow-hidden bg-[#e6e6e6] font-['Noto_Sans_CJK_KR',sans-serif]">
      <TitleBar />
      <TabRow />
      <Ribbon />
      <main className="relative flex-1 min-h-0 pt-[15px] pr-[14px] flex justify-center">
        <div className="w-[661px] bg-white border border-b-0 border-[#c6c6c6]" />
        <ChromeWindow />
      </main>
      <StatusBar />
      <Taskbar />
      <Watermark />
    </div>
  );
}
